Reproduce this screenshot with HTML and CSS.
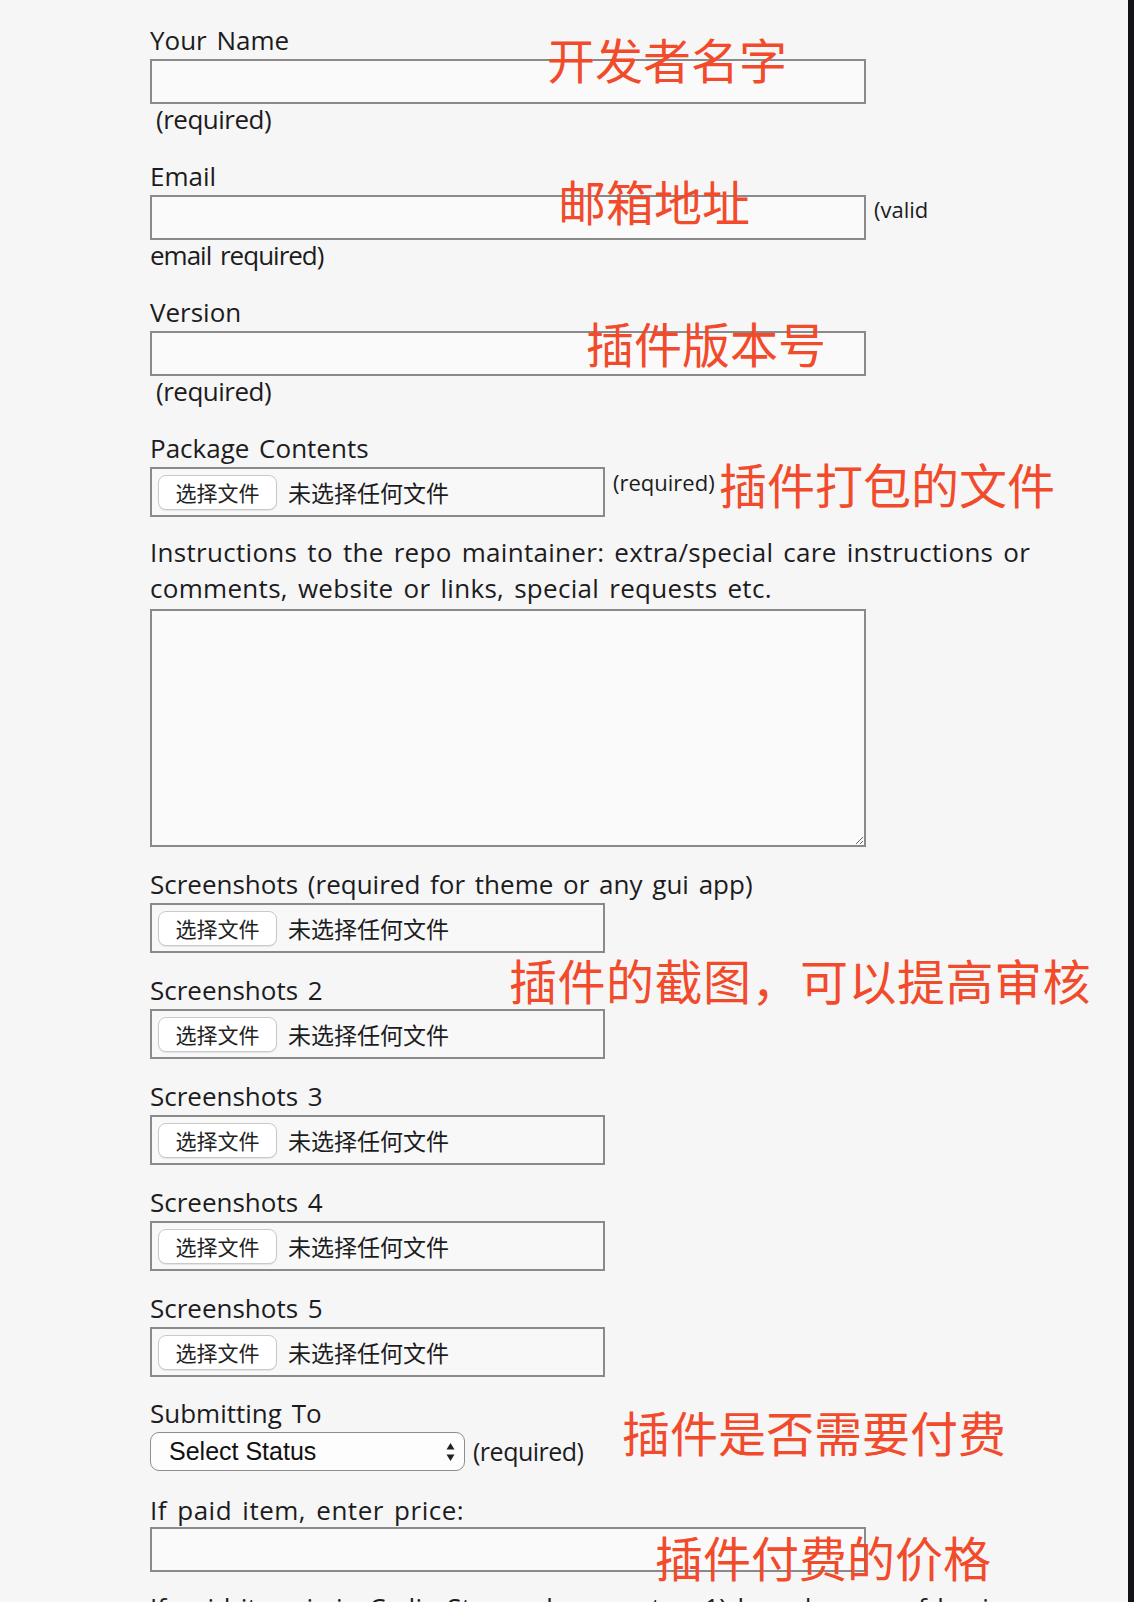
FILE: index.html
```html
<!DOCTYPE html>
<html lang="en">
<head>
<meta charset="utf-8">
<title>Submit package</title>
<link rel="stylesheet" href="styles.css">
</head>
<body>
<div class="page">
  <form class="form">
    <div class="field">
      <label class="label">Your Name</label>
      <input class="text" type="text">
      <div class="hint">(required)</div>
    </div>

    <div class="field">
      <label class="label">Email</label>
      <div class="row">
        <input class="text" type="text">
        <span class="note note-valid">(valid</span>
      </div>
      <div class="hint hint-flush">email required)</div>
    </div>

    <div class="field">
      <label class="label">Version</label>
      <input class="text" type="text">
      <div class="hint">(required)</div>
    </div>

    <div class="field">
      <label class="label">Package Contents</label>
      <div class="row">
        <div class="file"><span class="file-btn">选择文件</span><span class="file-status">未选择任何文件</span></div>
        <span class="note note-file">(required)</span>
      </div>
    </div>

    <div class="field field-desc">
      <p class="desc">Instructions to the repo maintainer: extra/special care instructions or comments, website or links, special requests etc.</p>
      <textarea class="area"></textarea>
    </div>

    <div class="field field-shot">
      <label class="label">Screenshots (required for theme or any gui app)</label>
      <div class="file"><span class="file-btn">选择文件</span><span class="file-status">未选择任何文件</span></div>
    </div>
    <div class="field field-shot">
      <label class="label">Screenshots 2</label>
      <div class="file"><span class="file-btn">选择文件</span><span class="file-status">未选择任何文件</span></div>
    </div>
    <div class="field field-shot">
      <label class="label">Screenshots 3</label>
      <div class="file"><span class="file-btn">选择文件</span><span class="file-status">未选择任何文件</span></div>
    </div>
    <div class="field field-shot">
      <label class="label">Screenshots 4</label>
      <div class="file"><span class="file-btn">选择文件</span><span class="file-status">未选择任何文件</span></div>
    </div>
    <div class="field field-shot">
      <label class="label">Screenshots 5</label>
      <div class="file"><span class="file-btn">选择文件</span><span class="file-status">未选择任何文件</span></div>
    </div>

    <div class="field field-select">
      <label class="label">Submitting To</label>
      <div class="row">
        <div class="select">
          <span class="select-text">Select Status</span>
          <svg class="select-arrows" width="9" height="20" viewBox="0 0 9 20"><path d="M4.5 1 L8.5 7.5 L0.5 7.5 Z M4.5 19 L8.5 12.5 L0.5 12.5 Z" fill="#222"/></svg>
        </div>
        <span class="note note-select">(required)</span>
      </div>
    </div>

    <div class="field field-price">
      <label class="label label-tight label-wide">If paid item, enter price:</label>
      <input class="text" type="text">
    </div>

    <p class="desc desc-bottom">If paid item is in Cydia Store, please enter: 1) brand name of business</p>
  </form>

  <div class="notes">
    <span class="mark mark-name">开发者名字</span>
    <span class="mark mark-email">邮箱地址</span>
    <span class="mark mark-version">插件版本号</span>
    <span class="mark mark-package">插件打包的文件</span>
    <span class="mark mark-shots">插件的截图，可以提高审核</span>
    <span class="mark mark-paid">插件是否需要付费</span>
    <span class="mark mark-price">插件付费的价格</span>
  </div>
</div>
</body>
</html>
```

FILE: styles.css
```css
html, body {
  margin: 0;
  padding: 0;
  height: 100%;
  overflow: hidden;
  background: #111316;
}

.page {
  position: relative;
  box-sizing: border-box;
  height: 100%;
  margin-right: 6px;
  background: #f6f6f6;
  color: #1c1c1e;
  font-family: "Open Sans", "Noto Sans CJK SC", sans-serif;
  font-size: 26px;
  word-spacing: 3px;
}

.form {
  padding: 25px 0 0 150px;
  width: 900px;
}

.field {
  margin-top: 27px;
}
.field:first-child {
  margin-top: 0;
}

.label {
  display: block;
  line-height: 30px;
  margin-bottom: 4px;
  white-space: nowrap;
}
.label-tight {
  margin-bottom: 2px;
}
.label-wide {
  letter-spacing: 0.5px;
}

.text {
  display: block;
  box-sizing: border-box;
  width: 716px;
  height: 45px;
  margin: 0;
  border: 2px solid #8a8a8a;
  background: #fafafa;
  font: inherit;
  outline: none;
}

.hint {
  line-height: 30px;
  padding-left: 6px;
  letter-spacing: -0.5px;
}
.hint-flush {
  padding-left: 0;
  letter-spacing: -1px;
}

.row {
  display: flex;
  align-items: flex-start;
}

.note {
  margin-left: 8px;
  font-size: 22px;
  line-height: 26px;
  white-space: nowrap;
}
.note-valid {
  margin-top: 1px;
}
.note-file {
  margin-top: 2px;
}
.note-select {
  margin-top: 6px;
  font-size: 25px;
  letter-spacing: -0.5px;
}

.file {
  box-sizing: border-box;
  display: flex;
  align-items: center;
  width: 455px;
  height: 50px;
  padding-left: 6px;
  border: 2px solid #8a8a8a;
  background: #f8f8f8;
  font-family: "Noto Sans CJK SC", sans-serif;
  word-spacing: 0;
}
.file-btn {
  box-sizing: border-box;
  display: flex;
  align-items: center;
  justify-content: center;
  width: 119px;
  height: 35px;
  border: 1px solid #c9c9c9;
  border-radius: 8px;
  background: #ffffff;
  box-shadow: 0 1px 1px rgba(0, 0, 0, 0.08);
  font-size: 21px;
  color: #222;
}
.file-status {
  margin-left: 11px;
  font-size: 23px;
  color: #1c1c1e;
}

.field-desc {
  margin-top: 17px;
}
.desc {
  margin: 0;
  line-height: 36px;
  letter-spacing: 0.3px;
}
.area {
  display: block;
  box-sizing: border-box;
  width: 716px;
  height: 238px;
  margin: 3px 0 0;
  border: 2px solid #8a8a8a;
  background: #fafafa;
  resize: both;
  outline: none;
}

.field-shot {
  margin-top: 22px;
}
.field-select {
  margin-top: 21px;
}

.select {
  box-sizing: border-box;
  display: flex;
  align-items: center;
  justify-content: space-between;
  width: 315px;
  height: 39px;
  padding: 0 9px 0 18px;
  border: 1.5px solid #8e8e8e;
  border-radius: 9px;
  background: #fdfdfd;
  font-family: "Liberation Sans", Arial, sans-serif;
  font-size: 25px;
  word-spacing: 0;
  color: #111;
}

.field-price {
  margin-top: 24px;
}

.desc-bottom {
  margin-top: 17px;
}

.notes {
  position: absolute;
  inset: 0;
  pointer-events: none;
}
.mark {
  position: absolute;
  font-family: "Noto Sans CJK SC", sans-serif;
  font-size: 48px;
  line-height: 48px;
  word-spacing: 0;
  color: #f24b2c;
  white-space: nowrap;
}
.mark-name { left: 547px; top: 34px; }
.mark-email { left: 558px; top: 176px; }
.mark-version { left: 586px; top: 318px; }
.mark-package { left: 719px; top: 459px; }
.mark-shots { left: 509px; top: 955px; letter-spacing: 0.5px; }
.mark-paid { left: 622px; top: 1407px; }
.mark-price { left: 655px; top: 1532px; }
```
